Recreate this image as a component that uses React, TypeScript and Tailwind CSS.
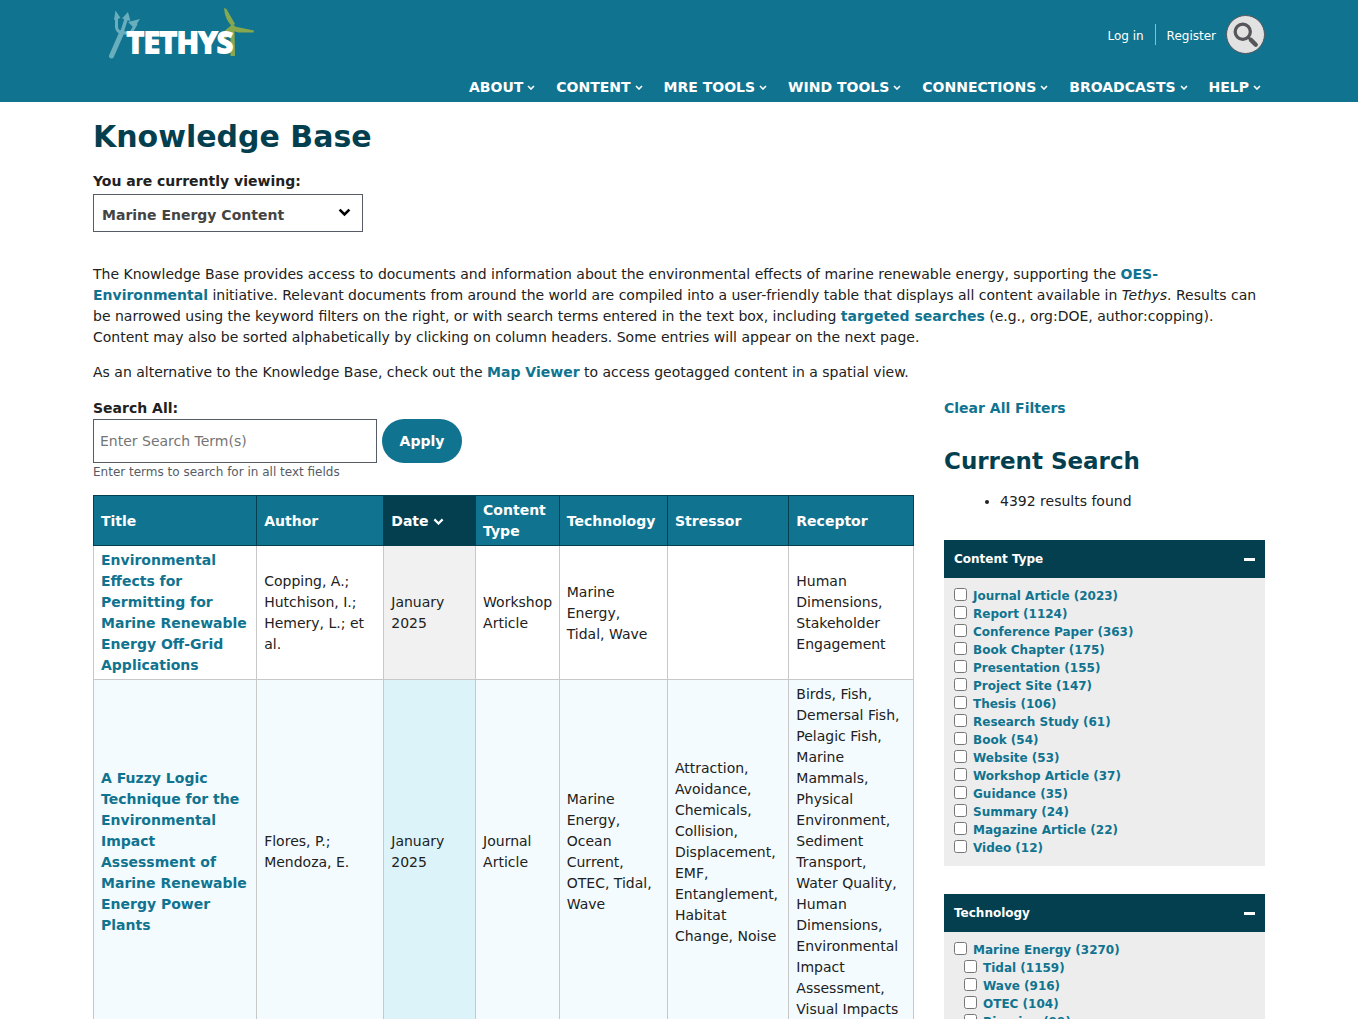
import { useState } from "react";

const navItems = [
  "About",
  "Content",
  "MRE Tools",
  "Wind Tools",
  "Connections",
  "Broadcasts",
  "Help",
];

const columns = [
  { name: "Title", width: "w-[19.9%]" },
  { name: "Author", width: "w-[15.5%]" },
  { name: "Date", width: "w-[11.2%]" },
  { name: "Content Type", width: "w-[10.2%]" },
  { name: "Technology", width: "w-[13.2%]" },
  { name: "Stressor", width: "w-[14.8%]" },
  { name: "Receptor", width: "w-[15.2%]" },
];

const documents = [
  {
    title:
      "Environmental Effects for Permitting for Marine Renewable Energy Off-Grid Applications",
    author: "Copping, A.; Hutchison, I.; Hemery, L.; et al.",
    date: "January 2025",
    type: "Workshop Article",
    technology: "Marine Energy, Tidal, Wave",
    stressor: "",
    receptor: "Human Dimensions, Stakeholder Engagement",
  },
  {
    title:
      "A Fuzzy Logic Technique for the Environmental Impact Assessment of Marine Renewable Energy Power Plants",
    author: "Flores, P.; Mendoza, E.",
    date: "January 2025",
    type: "Journal Article",
    technology: "Marine Energy, Ocean Current, OTEC, Tidal, Wave",
    stressor:
      "Attraction, Avoidance, Chemicals, Collision, Displacement, EMF, Entanglement, Habitat Change, Noise",
    receptor:
      "Birds, Fish, Demersal Fish, Pelagic Fish, Marine Mammals, Physical Environment, Sediment Transport, Water Quality, Human Dimensions, Environmental Impact Assessment, Visual Impacts",
  },
];

interface Filter {
  label: string;
  count: number;
  nested?: boolean;
}

const contentTypes: Filter[] = [
  { label: "Journal Article", count: 2023 },
  { label: "Report", count: 1124 },
  { label: "Conference Paper", count: 363 },
  { label: "Book Chapter", count: 175 },
  { label: "Presentation", count: 155 },
  { label: "Project Site", count: 147 },
  { label: "Thesis", count: 106 },
  { label: "Research Study", count: 61 },
  { label: "Book", count: 54 },
  { label: "Website", count: 53 },
  { label: "Workshop Article", count: 37 },
  { label: "Guidance", count: 35 },
  { label: "Summary", count: 24 },
  { label: "Magazine Article", count: 22 },
  { label: "Video", count: 12 },
];

const technologies: Filter[] = [
  { label: "Marine Energy", count: 3270 },
  { label: "Tidal", count: 1159, nested: true },
  { label: "Wave", count: 916, nested: true },
  { label: "OTEC", count: 104, nested: true },
  { label: "Riverine", count: 99, nested: true },
];

function Chevron({ className }: { className?: string }) {
  return (
    <svg viewBox="0 0 12 8" fill="none" className={className} aria-hidden="true">
      <path d="M1.5 1.5 6 6l4.5-4.5" stroke="currentColor" strokeWidth="2.4" />
    </svg>
  );
}

function Logo() {
  return (
    <svg width="148" height="52" viewBox="0 0 148 52" role="img" aria-label="Tethys">
      {/* Trident */}
      <g stroke="#69aebd" fill="none" strokeLinecap="round">
        <path d="M3.500 48 14 24" strokeWidth="5" />
        <path d="M14 24 18.500 10" strokeWidth="3.500" />
        <path d="M8.500 9V19Q9 24 14 24.500Q22 26 24 23L28 16" strokeWidth="3" />
      </g>
      <path d="M7.500 2.500 12.500 10 6 12Z" fill="#69aebd" />
      <path d="M20 4 22.500 13 14 10.500Z" fill="#69aebd" />
      <path d="M32 11 26 20 20 14Z" fill="#69aebd" />
      {/* Wind turbine */}
      <g fill="#87a84f">
        <path d="m122.500 20 4 0 .5 28h-4.500Z" />
        <path d="m116 0 2.500 1 8.500 15-3 2Q117 12 116 0Z" />
        <path d="m124 18 5 1 17 3.500-.5 2-15 0-7-2Z" />
        <path d="m121 19 4 3-11 13-3-7Z" />
        <circle cx="124.500" cy="20" r="3" />
      </g>
      <text
        x="19"
        y="45"
        fill="#fff"
        stroke="#fff"
        strokeWidth="2"
        className="font-['Open_Sans','Noto_Sans',sans-serif] text-[29px] font-bold"
      >
        TETHYS
      </text>
    </svg>
  );
}

function FilterPanel({ title, filters }: { title: string; filters: Filter[] }) {
  const [open, setOpen] = useState(true);

  return (
    <section className="mb-7 bg-[#ededed] text-[12px] font-bold">
      <h3>
        <button
          type="button"
          aria-expanded={open}
          onClick={() => setOpen(!open)}
          className="flex h-[38px] w-full items-center justify-between bg-[#043f50] px-[10px] text-white"
        >
          {title}
          <span className="h-[3px] w-[11px] bg-white" />
        </button>
      </h3>
      {open && (
        <ul className="px-[10px] pt-[9px] pb-[9px]">
          {filters.map((filter) => (
            <li key={filter.label} className={filter.nested ? "pl-[10px]" : ""}>
              <label className="flex h-[18px] gap-[6px] leading-[18px] text-[#10738f]">
                <input type="checkbox" className="mt-px size-[13px]" />
                {filter.label} ({filter.count})
              </label>
            </li>
          ))}
        </ul>
      )}
    </section>
  );
}

export default function App() {
  return (
    <div className="min-h-screen bg-white font-['DejaVu_Sans',Verdana,sans-serif] text-[14px] leading-[21px] text-[#212121]">
      <header className="bg-[#10738f] text-white">
        <div className="mx-auto max-w-[1172px] pb-1">
          <div className="flex h-[72px] items-start justify-between pl-[15px]">
            <a href="#" className="pt-2">
              <Logo />
            </a>
            <div className="flex items-center pt-[15px] text-[12px]">
              <a href="#" className="pt-1">
                Log in
              </a>
              <span className="mx-[11px] h-[21px] w-px bg-[#7cc4d8]" />
              <a href="#" className="pt-1">
                Register
              </a>
              <button
                type="button"
                aria-label="Search"
                className="ml-[10px] flex size-[39px] items-center justify-center rounded-full border border-[#55555a] bg-[#e2e2e2] text-[#55555a]"
              >
                <svg viewBox="0 0 24 24" fill="none" stroke="currentColor" className="size-[26px]">
                  <circle cx="9" cy="9" r="7" strokeWidth="3" />
                  <path d="m14 14 2.500 2.500" strokeWidth="2.500" />
                  <path d="m16.500 16.500 4.500 4.500" strokeWidth="4" strokeLinecap="round" />
                </svg>
              </button>
            </div>
          </div>
          <nav className="flex justify-end gap-[21px] pt-[5px] pr-1 text-[14px] font-bold">
            {navItems.map((item) => (
              <a key={item} href="#" className="flex items-center gap-1 uppercase">
                {item}
                <Chevron className="w-2" />
              </a>
            ))}
          </nav>
        </div>
      </header>

      <main className="mx-auto max-w-[1172px]">
        <h1 className="pt-[17px] text-[30px] leading-[36px] font-bold text-[#043f50]">
          Knowledge Base
        </h1>
        <label htmlFor="view" className="mt-4 mb-[2px] block font-bold">
          You are currently viewing:
        </label>
        <div className="relative w-[270px]">
          <select
            id="view"
            className="h-[38px] w-full appearance-none border border-[#565c65] bg-white pt-1 pl-2 font-bold text-[#444]"
          >
            <option>Marine Energy Content</option>
            <option>Wind Energy Content</option>
            <option>All Content</option>
          </select>
          <Chevron className="pointer-events-none absolute top-[14px] right-3 w-[13px] text-black" />
        </div>

        <p className="mt-8">
          The Knowledge Base provides access to documents and information about the
          environmental effects of marine renewable energy, supporting the{" "}
          <a href="#" className="font-bold text-[#10738f]">
            OES-Environmental
          </a>{" "}
          initiative. Relevant documents from around the world are compiled into a
          user-friendly table that displays all content available in <em>Tethys</em>.
          Results can be narrowed using the keyword filters on the right, or with search
          terms entered in the text box, including{" "}
          <a href="#" className="font-bold text-[#10738f]">
            targeted searches
          </a>{" "}
          (e.g., org:DOE, author:copping). Content may also be sorted alphabetically by
          clicking on column headers. Some entries will appear on the next page.
        </p>
        <p className="mt-[14px]">
          As an alternative to the Knowledge Base, check out the{" "}
          <a href="#" className="font-bold text-[#10738f]">
            Map Viewer
          </a>{" "}
          to access geotagged content in a spatial view.
        </p>

        <div className="mt-[15px] flex items-start gap-[30px]">
          <div className="flex-1">
            <form onSubmit={(e) => e.preventDefault()}>
              <label htmlFor="search" className="block font-bold">
                Search All:
              </label>
              <div className="flex gap-[5px]">
                <input
                  id="search"
                  type="text"
                  placeholder="Enter Search Term(s)"
                  className="h-11 w-[284px] border border-[#565c65] px-[6px] placeholder:text-[#757575]"
                />
                <button
                  type="submit"
                  className="h-11 w-20 rounded-full bg-[#10738f] font-bold text-white"
                >
                  Apply
                </button>
              </div>
              <p className="text-[12px] leading-[18px] text-[#565c65]">
                Enter terms to search for in all text fields
              </p>
            </form>

            <table className="mt-[14px] w-full table-fixed border-collapse">
              <thead>
                <tr className="bg-[#10738f] text-left text-white">
                  {columns.map((column) => (
                    <th
                      key={column.name}
                      className={`border border-[#043f50] px-[7px] pt-1 pb-[3px] ${column.width} ${
                        column.name === "Date" ? "bg-[#043f50]" : ""
                      }`}
                    >
                      {column.name}
                      {column.name === "Date" && (
                        <Chevron className="ml-1 inline-block w-[11px]" />
                      )}
                    </th>
                  ))}
                </tr>
              </thead>
              <tbody>
                {documents.map((doc) => (
                  <tr
                    key={doc.title}
                    className="group even:bg-[#f3fbfe] *:border *:border-[#c8c8c8] *:px-[7px] *:pt-1 *:pb-[3px]"
                  >
                    <td>
                      <a href="#" className="font-bold text-[#10738f]">
                        {doc.title}
                      </a>
                    </td>
                    <td>{doc.author}</td>
                    <td className="bg-[#f1f1f1] group-even:bg-[#dcf3fa]">{doc.date}</td>
                    <td>{doc.type}</td>
                    <td>{doc.technology}</td>
                    <td>{doc.stressor}</td>
                    <td>{doc.receptor}</td>
                  </tr>
                ))}
              </tbody>
            </table>
          </div>

          <aside className="w-[321px]">
            <a href="#" className="font-bold text-[#10738f]">
              Clear All Filters
            </a>
            <h2 className="mt-7 text-[23px] leading-[28px] font-bold text-[#043f50]">
              Current Search
            </h2>
            <ul className="mt-4 mb-7 list-disc pl-14">
              <li>4392 results found</li>
            </ul>
            <FilterPanel title="Content Type" filters={contentTypes} />
            <FilterPanel title="Technology" filters={technologies} />
          </aside>
        </div>
      </main>
    </div>
  );
}
